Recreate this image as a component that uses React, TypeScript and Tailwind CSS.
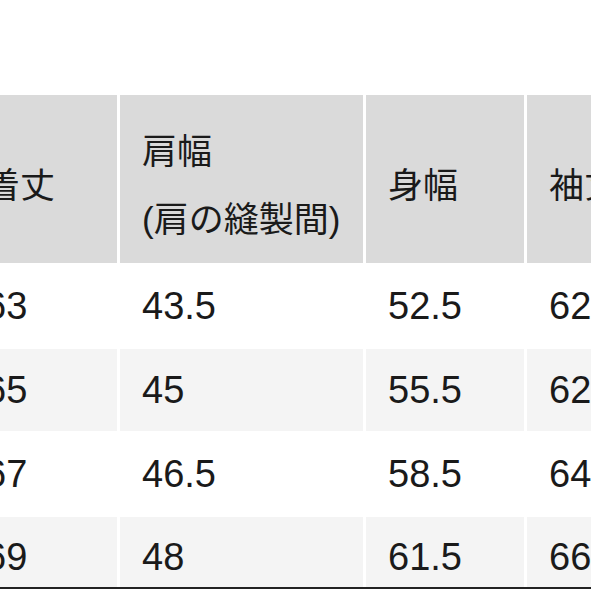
const font = { fontFamily: '"Liberation Sans", "Noto Sans CJK JP", sans-serif' }

const rows = [
  ["63", "43.5", "52.5", "62"],
  ["65", "45", "55.5", "62"],
  ["67", "46.5", "58.5", "64"],
  ["69", "48", "61.5", "66"],
]

const cols = "grid grid-cols-[154px_243px_158px_158px] gap-x-[3px]"

export default function App() {
  return (
    <div className="w-[591px] h-[591px] overflow-hidden bg-white text-[#1a1a1a]" style={font}>
      <div className="h-[95px]" />
      <div className="ml-[-37px] w-[720px]">
        {/* header */}
        <div className={`${cols} h-[168px]`}>
          <div className="bg-[#dadada] flex items-center px-[22px] pt-[14px] text-[35px]">着丈</div>
          <div className="bg-[#dadada] flex items-center px-[22px] pt-[14px] text-[35px] leading-[68px]">
            <div>
              肩幅
              <br />
              (肩の縫製間)
            </div>
          </div>
          <div className="bg-[#dadada] flex items-center px-[22px] pt-[14px] text-[35px]">身幅</div>
          <div className="bg-[#dadada] flex items-center px-[22px] pt-[14px] text-[35px]">袖丈</div>
        </div>
        <div className="flex flex-col gap-y-[2px] mt-[2px]">
          {rows.map((r, i) => (
            <div key={i} className={`${cols} ${i === 3 ? "h-[72px] border-b-2 border-[#222]" : "h-[82px]"}`}>
              {r.map((v, j) => (
                <div
                  key={j}
                  className={`flex items-center px-[22px] text-[38px] ${i % 2 === 1 ? "bg-[#f4f4f4]" : "bg-white"} ${i === 3 ? "pt-[10px]" : ""}`}
                >
                  {v}
                </div>
              ))}
            </div>
          ))}
        </div>
      </div>
    </div>
  )
}
